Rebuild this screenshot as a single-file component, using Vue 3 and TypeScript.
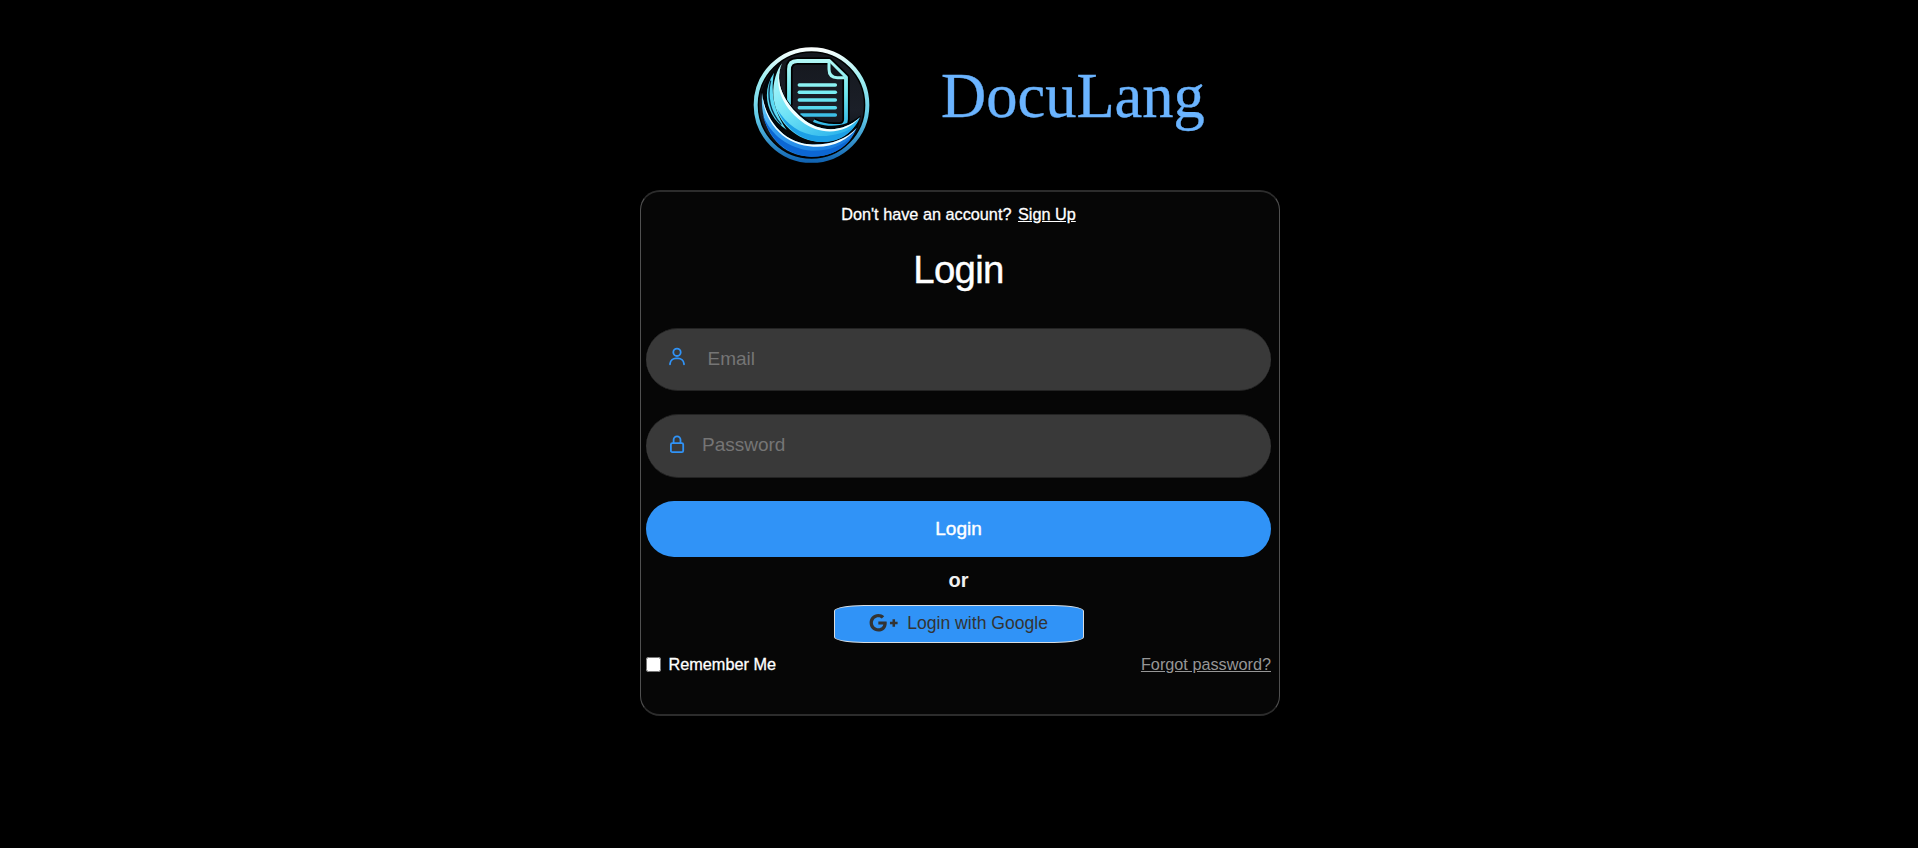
<script setup lang="ts">
import { ref } from 'vue'

const email = ref('')
const password = ref('')
const remember = ref(false)
</script>

<template>
  <main class="page">
    <header class="brand">
      <svg class="logo" viewBox="0 0 420 420" aria-hidden="true">
        <defs>
          <linearGradient id="ring" x1="0" y1="0" x2="0" y2="1">
            <stop offset="0" stop-color="#fafffe" />
            <stop offset=".25" stop-color="#a2f0f2" />
            <stop offset=".6" stop-color="#62cbe8" />
            <stop offset="1" stop-color="#1265b3" />
          </linearGradient>
          <linearGradient id="sheet" gradientUnits="userSpaceOnUse" x1="0" y1="75" x2="0" y2="280">
            <stop offset="0" stop-color="#b4f8f6" />
            <stop offset=".5" stop-color="#6fe7ee" />
            <stop offset="1" stop-color="#2fb5e6" />
          </linearGradient>
          <linearGradient id="upper" gradientUnits="userSpaceOnUse" x1="110" y1="90" x2="270" y2="325">
            <stop offset="0" stop-color="#b6fbfa" />
            <stop offset=".5" stop-color="#6fe3f6" />
            <stop offset="1" stop-color="#2bb4ec" />
          </linearGradient>
          <linearGradient id="lower" gradientUnits="userSpaceOnUse" x1="66" y1="180" x2="230" y2="366">
            <stop offset="0" stop-color="#6fd4fa" />
            <stop offset=".4" stop-color="#36a0f2" />
            <stop offset="1" stop-color="#1a7fe0" />
          </linearGradient>
          <linearGradient id="disc" x1="0" y1="0" x2="0" y2="1">
            <stop offset="0" stop-color="#14171d" />
            <stop offset=".55" stop-color="#1b1f28" />
            <stop offset="1" stop-color="#05070b" />
          </linearGradient>
        </defs>
        <circle cx="214.500" cy="213" r="167" fill="url(#disc)" />
        <circle cx="214.500" cy="213" r="161" fill="none" stroke="#000" stroke-width="8" />
        <circle cx="214.500" cy="213" r="167.500" fill="none" stroke="url(#ring)" stroke-width="12" />

        <g fill="none" stroke-linejoin="round">
          <path d="M147 214V106q0-25 25-25h96l50 49v126q0 20-20 20h-16q-32 0-62-14" stroke="#000" stroke-width="22" />
          <path d="M147 214V106q0-25 25-25h96l50 49v126q0 20-20 20h-16q-32 0-62-14" stroke="url(#sheet)" stroke-width="11.500" />
          <path d="M267 84v22q0 25 25 25h22" fill="#10141b" stroke="#a0f6f4" stroke-width="9" />
          <path d="M278 101l22 22q-22 0-22-22z" fill="#10141b" />
        </g>
        <g fill="none" stroke-width="10.500" stroke-linecap="round">
          <path d="M178 153h108" stroke="#8cf2f3" />
          <path d="M178 175h108" stroke="#78edf3" />
          <path d="M178 198h108" stroke="#69e3f0" />
          <path d="M178 221h108" stroke="#58d9ed" />
          <path d="M184 243h102" stroke="#3dbfe7" />
        </g>

        <path d="M126 84C104 150 138 211 190 248C245 286 315 284 362 244C354 318 300 368 214 368C122 368 64 290 63 174C80 130 98 102 126 84Z" fill="#020508" />
        <path d="M66 176C74 254 128 324 208 331C264 335 318 318 350 282C328 340 276 368 214 368C114 366 58 282 66 176Z" fill="url(#lower)" />
        <path d="M67 240C92 304 146 344 214 350C262 352 306 336 336 308C312 346 268 368 214 368C138 365 86 314 67 240Z" fill="#0c67d4" />
        <path d="M66 176C74 254 128 324 208 331C264 335 318 318 350 282C322 322 268 345 208 337C124 326 70 260 66 176Z" fill="#f2ffff" />

        <path d="M102 116C62 176 80 246 140 288C106 238 90 186 102 116Z" fill="#5cdaf3" />
        <path d="M126 88C100 148 136 210 186 252C240 298 310 296 360 250C338 302 290 328 232 323C158 316 104 254 100 184C98 146 110 108 126 88Z" fill="url(#upper)" />
        <path d="M112 226C140 272 180 302 236 306C278 308 318 296 344 276C318 312 280 328 232 323C176 316 132 278 112 226Z" fill="#1c9fe6" />
        <path d="M126 88C100 148 136 210 186 252C240 298 310 296 360 250C316 302 242 307 184 262C124 216 98 150 126 88Z" fill="#f2ffff" />
        <path d="M92 140C80 188 90 234 124 272" fill="none" stroke="#07324f" stroke-width="4" />
      </svg>
      <div class="brand-name">DocuLang</div>
    </header>

    <form class="card" @submit.prevent>
      <div class="signup">Don't have an account? <a href="#">Sign Up</a></div>
      <h1>Login</h1>
      <label class="field email">
        <svg viewBox="0 0 18 20" aria-hidden="true">
          <circle cx="9" cy="5.3" r="3.7" />
          <path d="M2 17.3v-.5a6 6 0 0 1 6-5.4h2a6 6 0 0 1 6 5.4v.5" />
        </svg>
        <input v-model="email" type="email" placeholder="Email" />
      </label>
      <label class="field password">
        <svg viewBox="0 0 18 20" aria-hidden="true">
          <rect x="2.9" y="9.2" width="12.3" height="8.9" rx="1.4" />
          <path d="M5.6 9V5.8a3.45 3.45 0 0 1 6.9 0V9" />
        </svg>
        <input v-model="password" type="password" placeholder="Password" />
      </label>
      <button class="submit" type="submit">Login</button>
      <div class="or">or</div>
      <button class="google" type="button">
        <svg viewBox="0 0 640 512" aria-hidden="true">
          <path d="M386.061 228.496c1.834 9.692 3.143 19.384 3.143 31.956C389.204 370.205 315.599 448 204.8 448c-106.084 0-192-85.915-192-192s85.916-192 192-192c51.864 0 95.083 18.859 128.611 50.292l-52.126 50.03c-14.145-13.621-39.028-29.599-76.485-29.599-65.484 0-118.92 54.221-118.92 121.277 0 67.056 53.436 121.277 118.92 121.277 75.961 0 104.513-54.745 108.965-82.773H204.8v-66.009h181.261zm185.406 6.437V179.2h-56.001v55.733h-55.733v56.001h55.733v55.733h56.001v-55.733H627.2v-56.001h-55.733z" />
        </svg>
        <span>Login with Google</span>
      </button>
      <div class="options">
        <label class="remember"><input v-model="remember" type="checkbox" /><span>Remember Me</span></label>
        <a href="#">Forgot password?</a>
      </div>
    </form>
  </main>
</template>

<style>
body {
  margin: 0;
  background: #000;
}
</style>

<style scoped>
.page {
  box-sizing: border-box;
  height: 848px;
  padding: 34px 0 0 2px;
  overflow: hidden;
  background: #000;
  font-family: "Liberation Sans", Arial, sans-serif;
  color: #fff;
}
.brand {
  display: flex;
  width: 640px;
  height: 156px;
  margin: 0 auto;
}
.logo {
  width: 140px;
  height: 140px;
  margin-left: 100px;
  flex: none;
}
.brand-name {
  margin: 26px 0 0 61px;
  font: 62.5px/72px "Liberation Serif", "Times New Roman", serif;
  color: #6bb4ff;
  -webkit-text-stroke: 0.4px #6bb4ff;
}
.card {
  box-sizing: border-box;
  display: flex;
  flex-direction: column;
  width: 640px;
  height: 526px;
  margin: 0 auto;
  padding: 12px 8px 0 5px;
  background: #060606;
  border: solid #505050;
  border-width: 2px 1px;
  border-top-color: #2c2c2c;
  border-bottom-color: #2c2c2c;
  border-radius: 20px;
}
.signup {
  height: 20px;
  font-size: 16.25px;
  line-height: 20px;
  text-align: center;
  -webkit-text-stroke: 0.3px #fff;
}
.signup a {
  margin-left: 2px;
  color: inherit;
}
h1 {
  margin: 24px 0 36px;
  font-size: 38.4px;
  font-weight: 400;
  line-height: 44px;
  letter-spacing: -0.7px;
  text-align: center;
  -webkit-text-stroke: 0.4px #fff;
}
.field {
  box-sizing: border-box;
  display: flex;
  align-items: center;
  flex: none;
  height: 63px;
  margin-bottom: 23px;
  padding-left: 22px;
  background: #393939;
  border: solid #232323;
  border-width: 1px 0;
  border-radius: 32px;
}
.field svg {
  width: 18px;
  height: 20px;
  margin-right: 21.5px;
  margin-bottom: 6px;
  fill: none;
  stroke: #3093f7;
  stroke-width: 1.8;
  stroke-linecap: round;
}
.password {
  height: 64px;
}
.password svg {
  margin-right: 16px;
  margin-bottom: 5px;
}
.field input {
  flex: 1;
  min-width: 0;
  margin-bottom: 2px;
  padding: 0;
  background: none;
  border: 0;
  outline: 0;
  color: #fff;
  font: 19px/24px "Liberation Sans", Arial, sans-serif;
}
.field input::placeholder {
  color: #757575;
}
.submit {
  height: 56px;
  flex: none;
  padding: 0;
  background: #3093f7;
  border: 0;
  border-radius: 28px;
  color: #fff;
  font: 19px/24px "Liberation Sans", Arial, sans-serif;
  -webkit-text-stroke: 0.4px #fff;
}
.or {
  height: 48px;
  font-size: 20px;
  font-weight: 700;
  line-height: 47px;
  text-align: center;
  color: #f0f0f0;
}
.google {
  box-sizing: border-box;
  align-self: center;
  display: flex;
  align-items: center;
  width: 250px;
  height: 38px;
  padding: 0 0 0 34px;
  background: #3093f7;
  border: 1px solid #d9dde0;
  border-radius: 30px / 6px;
  color: #333;
  font: 17.6px/22px "Liberation Sans", Arial, sans-serif;
  white-space: nowrap;
}
.google svg {
  width: 29.2px;
  height: 23.4px;
  margin: 0 9.5px 2px 0;
  fill: #333;
}
.google span {
  margin-bottom: 2px;
}
.options {
  display: flex;
  justify-content: space-between;
  align-items: center;
  margin-top: 11px;
  font-size: 16.25px;
  line-height: 20px;
}
.remember {
  display: flex;
  align-items: center;
  -webkit-text-stroke: 0.3px #fff;
}
.remember input {
  width: 15px;
  height: 15px;
  margin: 0 7.5px 0 0;
}
.options a {
  color: #969696;
}
</style>
